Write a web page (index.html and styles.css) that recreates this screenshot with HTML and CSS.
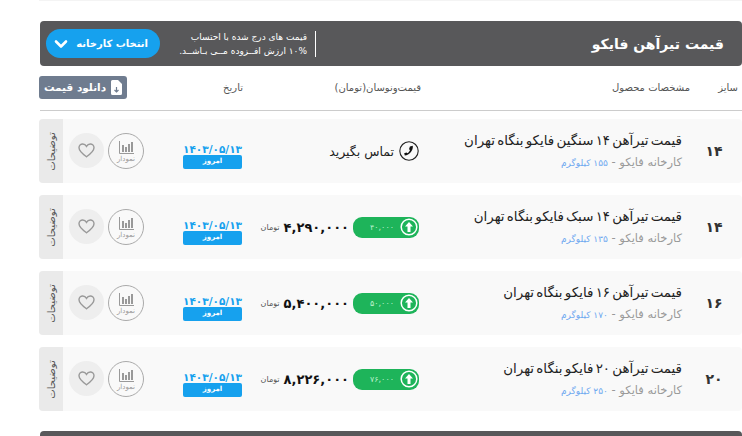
FILE: index.html
```html
<!DOCTYPE html>
<html lang="fa" dir="rtl">
<head>
<meta charset="utf-8">
<title>قیمت تیرآهن فایکو</title>
<link rel="stylesheet" href="styles.css">
</head>
<body>
<div class="topline"></div>
<main class="wrap">
  <header class="head">
    <h1 class="title">قیمت تیرآهن فایکو</h1>
    <div class="head-left">
      <p class="note"><span>قیمت های درج شده با احتساب</span><span>۱۰% ارزش افــزوده مــی بـاشــد.</span></p>
      <button class="pick"><span>انتخاب کارخانه</span>
        <svg width="14" height="10" viewBox="0 0 14 10"><path d="M2 2.500l5 5 5-5" fill="none" stroke="#fff" stroke-width="2.600" stroke-linecap="round" stroke-linejoin="round"/></svg>
      </button>
    </div>
  </header>
  <div class="cols">
    <span class="c-size">سایز</span>
    <span class="c-spec">مشخصات محصول</span>
    <span class="c-price">قیمت‌ونوسان(تومان)</span>
    <span class="c-date">تاریخ</span>
    <span class="c-dl"><a class="dl">
      <svg width="11" height="15" viewBox="0 0 11 15"><path d="M0 1.500A1.500 1.500 0 0 1 1.500 0H7l4 4v9.500A1.500 1.500 0 0 1 9.500 15h-8A1.500 1.500 0 0 1 0 13.500z" fill="#fff"/><path d="M5.500 7v4.500M3.500 10l2 2 2-2" fill="none" stroke="#6f7c8f" stroke-width="1.200"/></svg>
      دانلود قیمت</a></span>
  </div>
  <section class="rows">
    <article class="row">
      <div class="size">۱۴</div>
      <div class="spec"><h2>قیمت تیرآهن ۱۴ سنگین فایکو بنگاه تهران</h2><p>کارخانه فایکو - <b>۱۵۵ کیلوگرم</b></p></div>
      <div class="price contact"><svg class="ph" width="20" height="20" viewBox="0 0 20 20"><circle cx="10" cy="10" r="9.200" fill="none" stroke="#222" stroke-width="1.100"/><path d="M13.800 4.800c.6 4.800-3.400 9.400-8 9.800l-.6-2.300 2.300-.9.900.9c1.300-.8 2.200-2 2.600-3.300l-1-.7.900-2.700z" fill="#111"/></svg><span>تماس بگیرید</span></div>
      <div class="date"><span>۱۴۰۳/۰۵/۱۳</span><em>امروز</em></div>
      <div class="acts">
        <div class="chart"><svg width="15" height="13" viewBox="0 0 15 13"><path d="M.5 0v12.500H15" fill="none" stroke="#999"/><path d="M3 4h2v7H3zM6 6h2v5H6zM9 3h2v8H9zM12 1h2v10h-2z" fill="#999"/></svg><span>نمودار</span></div>
        <div class="fav"><svg width="17" height="15" viewBox="0 0 17 15"><path d="M8.500 13.800C3 9.800 1 7.500 1 4.800 1 2.600 2.700 1 4.700 1c1.600 0 3 .9 3.800 2.300C9.300 1.900 10.700 1 12.300 1 14.300 1 16 2.600 16 4.800c0 2.700-2 5-7.500 9z" fill="none" stroke="#999" stroke-width="1.400"/></svg></div>
      </div>
      <div class="tab"><span>توضیحات</span></div>
    </article>
    <article class="row">
      <div class="size">۱۴</div>
      <div class="spec"><h2>قیمت تیرآهن ۱۴ سبک فایکو بنگاه تهران</h2><p>کارخانه فایکو - <b>۱۳۵ کیلوگرم</b></p></div>
      <div class="price"><span class="chg"><svg width="18" height="18" viewBox="0 0 18 18"><circle cx="9" cy="9" r="7.800" fill="none" stroke="#fff" stroke-width="1.500"/><path d="M9 4l4 4.500h-2.500V14h-3V8.500H5z" fill="#fff"/></svg><i>۴۰,۰۰۰</i></span><strong>۴,۲۹۰,۰۰۰</strong><small>تومان</small></div>
      <div class="date"><span>۱۴۰۳/۰۵/۱۳</span><em>امروز</em></div>
      <div class="acts">
        <div class="chart"><svg width="15" height="13" viewBox="0 0 15 13"><path d="M.5 0v12.500H15" fill="none" stroke="#999"/><path d="M3 4h2v7H3zM6 6h2v5H6zM9 3h2v8H9zM12 1h2v10h-2z" fill="#999"/></svg><span>نمودار</span></div>
        <div class="fav"><svg width="17" height="15" viewBox="0 0 17 15"><path d="M8.500 13.800C3 9.800 1 7.500 1 4.800 1 2.600 2.700 1 4.700 1c1.600 0 3 .9 3.800 2.300C9.300 1.900 10.700 1 12.300 1 14.300 1 16 2.600 16 4.800c0 2.700-2 5-7.500 9z" fill="none" stroke="#999" stroke-width="1.400"/></svg></div>
      </div>
      <div class="tab"><span>توضیحات</span></div>
    </article>
    <article class="row">
      <div class="size">۱۶</div>
      <div class="spec"><h2>قیمت تیرآهن ۱۶ فایکو بنگاه تهران</h2><p>کارخانه فایکو - <b>۱۷۰ کیلوگرم</b></p></div>
      <div class="price"><span class="chg"><svg width="18" height="18" viewBox="0 0 18 18"><circle cx="9" cy="9" r="7.800" fill="none" stroke="#fff" stroke-width="1.500"/><path d="M9 4l4 4.500h-2.500V14h-3V8.500H5z" fill="#fff"/></svg><i>۵۰,۰۰۰</i></span><strong>۵,۴۰۰,۰۰۰</strong><small>تومان</small></div>
      <div class="date"><span>۱۴۰۳/۰۵/۱۳</span><em>امروز</em></div>
      <div class="acts">
        <div class="chart"><svg width="15" height="13" viewBox="0 0 15 13"><path d="M.5 0v12.500H15" fill="none" stroke="#999"/><path d="M3 4h2v7H3zM6 6h2v5H6zM9 3h2v8H9zM12 1h2v10h-2z" fill="#999"/></svg><span>نمودار</span></div>
        <div class="fav"><svg width="17" height="15" viewBox="0 0 17 15"><path d="M8.500 13.800C3 9.800 1 7.500 1 4.800 1 2.600 2.700 1 4.700 1c1.600 0 3 .9 3.800 2.300C9.300 1.900 10.700 1 12.300 1 14.300 1 16 2.600 16 4.800c0 2.700-2 5-7.500 9z" fill="none" stroke="#999" stroke-width="1.400"/></svg></div>
      </div>
      <div class="tab"><span>توضیحات</span></div>
    </article>
    <article class="row">
      <div class="size">۲۰</div>
      <div class="spec"><h2>قیمت تیرآهن ۲۰ فایکو بنگاه تهران</h2><p>کارخانه فایکو - <b>۲۵۰ کیلوگرم</b></p></div>
      <div class="price"><span class="chg"><svg width="18" height="18" viewBox="0 0 18 18"><circle cx="9" cy="9" r="7.800" fill="none" stroke="#fff" stroke-width="1.500"/><path d="M9 4l4 4.500h-2.500V14h-3V8.500H5z" fill="#fff"/></svg><i>۷۶,۰۰۰</i></span><strong>۸,۲۲۶,۰۰۰</strong><small>تومان</small></div>
      <div class="date"><span>۱۴۰۳/۰۵/۱۳</span><em>امروز</em></div>
      <div class="acts">
        <div class="chart"><svg width="15" height="13" viewBox="0 0 15 13"><path d="M.5 0v12.500H15" fill="none" stroke="#999"/><path d="M3 4h2v7H3zM6 6h2v5H6zM9 3h2v8H9zM12 1h2v10h-2z" fill="#999"/></svg><span>نمودار</span></div>
        <div class="fav"><svg width="17" height="15" viewBox="0 0 17 15"><path d="M8.500 13.800C3 9.800 1 7.500 1 4.800 1 2.600 2.700 1 4.700 1c1.600 0 3 .9 3.800 2.300C9.300 1.900 10.700 1 12.300 1 14.300 1 16 2.600 16 4.800c0 2.700-2 5-7.500 9z" fill="none" stroke="#999" stroke-width="1.400"/></svg></div>
      </div>
      <div class="tab"><span>توضیحات</span></div>
    </article>
  </section>
  <div class="nextbar"></div>
</main>
</body>
</html>
```

FILE: styles.css
```css
* { box-sizing: border-box; }
html, body { margin: 0; padding: 0; height: 436px; overflow: hidden; background: #fff; }
body { font-family: "DejaVu Sans", "Noto Sans", sans-serif; color: #333; }
.topline { height: 1px; background: #f4f4f4; margin-left: 39px; }
.wrap { width: 702px; margin-left: 40px; padding-top: 20px; }
.head { height: 45px; background: #58585a; border-radius: 4px; display: flex; justify-content: space-between; align-items: center; padding: 0 18px 0 6px; }
.title { margin: 0; color: #fff; font-size: 14px; font-weight: 700; }
.head-left { display: flex; align-items: center; gap: 18px; }
.note { margin: 0; display: flex; flex-direction: column; gap: 2px; color: #fff; font-size: 9px; line-height: 12px; padding-right: 8px; border-right: 1px solid #fff; width: 138px; white-space: nowrap; }
.pick { width: 114px; height: 29px; border: 0; border-radius: 15px; background: #16a1ee; color: #fff; font: 700 10px "DejaVu Sans", sans-serif; display: flex; align-items: center; justify-content: space-between; padding: 0 12px 0 8px; }
.cols { height: 45px; padding-bottom: 2px; display: grid; grid-template-columns: 52px 269px 178px 1fr 111px; align-items: center; font-size: 10px; color: #555; border-bottom: 1px solid #ccc; }
.c-size { padding-right: 4px; white-space: nowrap; }
.c-spec, .c-price { white-space: nowrap; }
.c-date { text-align: right; }
.c-dl { display: flex; justify-content: flex-end; margin-left: -1px; }
.dl { width: 88px; height: 23px; background: #6f7c8f; border-radius: 3px; color: #fff; font-size: 10.500px; font-weight: 700; display: flex; align-items: center; justify-content: center; gap: 5px; white-space: nowrap; }
.rows { padding-top: 8px; display: flex; flex-direction: column; gap: 12px; }
.row { height: 64px; background: #f9f9f9; border-radius: 4px; display: grid; grid-template-columns: 60px 263px 177px 78px 1fr 24px; align-items: center; margin-left: -1px; }
.size { text-align: center; font-size: 14px; font-weight: 700; padding-left: 4px; }
.spec { white-space: nowrap; }
.spec h2 { margin: 0 0 7px; font-size: 13.400px; font-weight: 400; color: #222; word-spacing: -2px; }
.spec p { margin: 0; font-size: 11.500px; color: #999; }
.spec b { font-weight: 400; font-size: 9px; color: #6ea8f0; }
.price { display: flex; align-items: center; gap: 4px; white-space: nowrap; }
.contact { gap: 5px; font-size: 12.500px; color: #222; }
.ph { flex: none; }
.chg { width: 66px; height: 21px; background: #1eb45a; border-radius: 9px; color: #b9f0cc; display: flex; align-items: center; gap: 6px; padding: 0 1px; }
.chg i { font-style: normal; font-size: 8px; }
.price strong { font-size: 13px; color: #111; }
.price small { font-size: 8px; color: #555; }
.date { display: flex; flex-direction: column; align-items: center; width: 59px; padding-top: 10px; }
.date span { color: #16a1ee; font-size: 10.500px; font-weight: 700; line-height: 12px; white-space: nowrap; }
.date em { width: 59px; height: 14px; background: #16a1ee; border-radius: 2px; color: #fff; font-style: normal; font-weight: 700; font-size: 7px; line-height: 13px; text-align: center; }
.acts { display: flex; gap: 4px; justify-content: flex-end; justify-self: end; padding-left: 6px; }
.chart { width: 36px; height: 36px; border: 1px solid #aaa; border-radius: 50%; display: flex; flex-direction: column; align-items: center; padding-top: 7px; }
.chart span { font-size: 7px; color: #999; line-height: 10px; }
.fav { width: 35px; height: 35px; border-radius: 50%; background: #eee; display: flex; align-items: center; justify-content: center; }
.tab { height: 64px; background: #eaeaea; display: flex; align-items: center; justify-content: center; border-radius: 4px 0 0 4px; overflow: hidden; }
.tab span { transform: rotate(-90deg); font-size: 10px; color: #555; white-space: nowrap; }
.nextbar { height: 8px; background: #58585a; border-radius: 4px 4px 0 0; margin-top: 20px; }
```
